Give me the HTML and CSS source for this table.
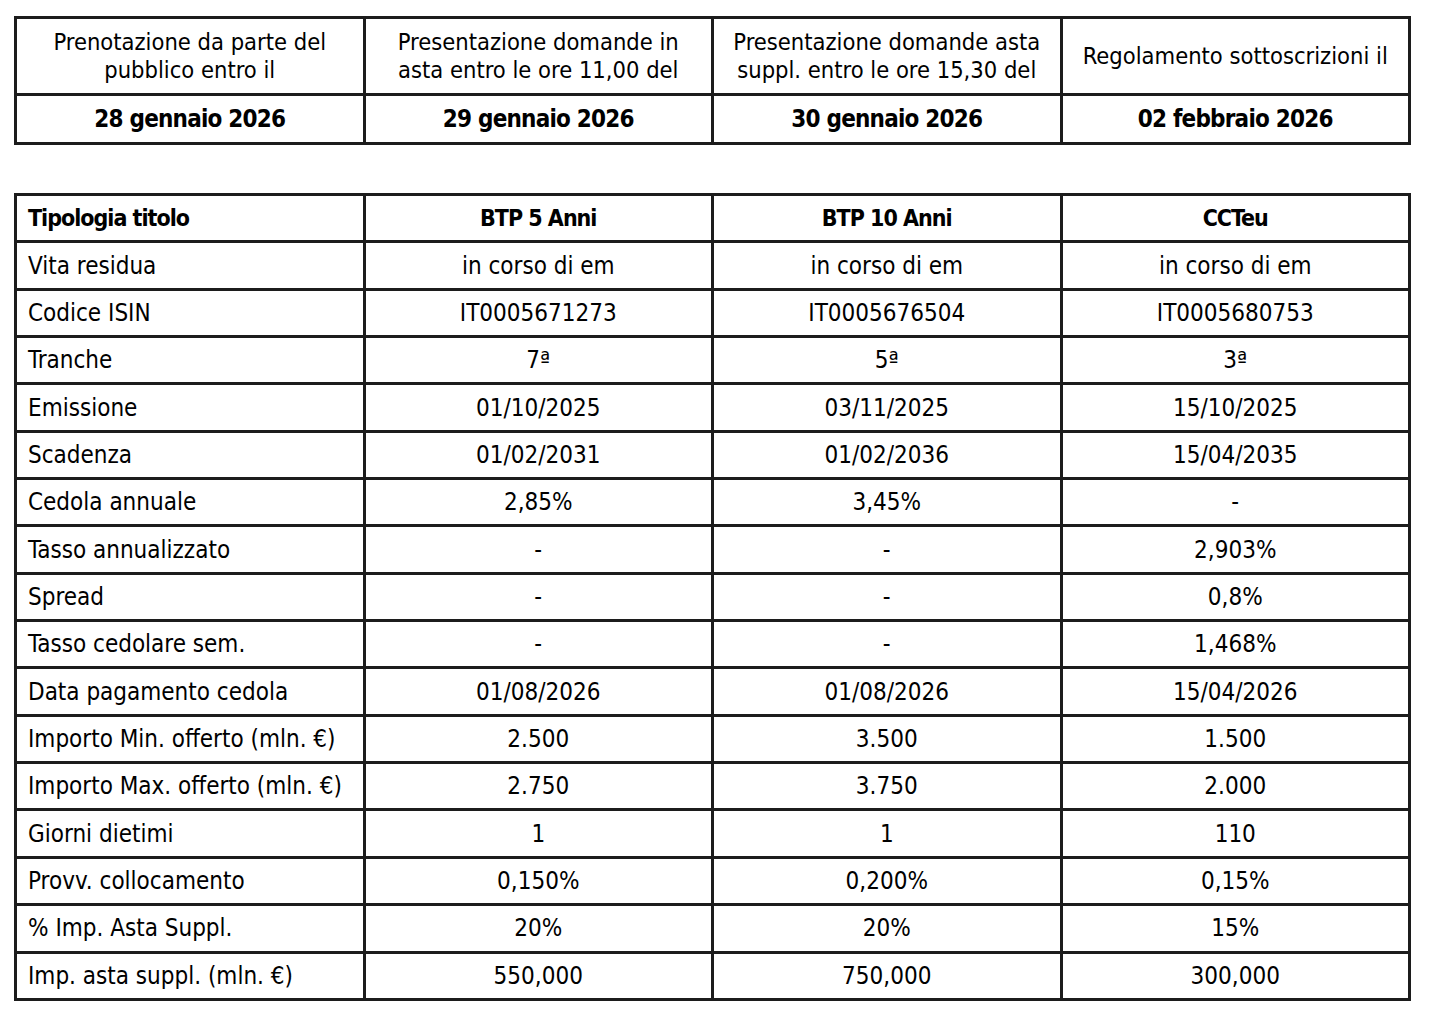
FILE: index.html
```html
<!DOCTYPE html>
<html lang="it">
<head>
<meta charset="utf-8">
<title>Asta titoli di Stato</title>
<link rel="stylesheet" href="styles.css">
</head>
<body>
<table class="dates">
  <tr class="dates-head">
    <td>Prenotazione da parte del pubblico entro il</td>
    <td>Presentazione domande in asta entro le ore 11,00 del</td>
    <td>Presentazione domande asta suppl. entro le ore 15,30 del</td>
    <td>Regolamento sottoscrizioni il</td>
  </tr>
  <tr class="dates-val">
    <td>28 gennaio 2026</td>
    <td>29 gennaio 2026</td>
    <td>30 gennaio 2026</td>
    <td>02 febbraio 2026</td>
  </tr>
</table>

<table class="bonds">
  <tr class="bonds-head"><td>Tipologia titolo</td><td>BTP 5 Anni</td><td>BTP 10 Anni</td><td>CCTeu</td></tr>
  <tr><td>Vita residua</td><td>in corso di em</td><td>in corso di em</td><td>in corso di em</td></tr>
  <tr><td>Codice ISIN</td><td>IT0005671273</td><td>IT0005676504</td><td>IT0005680753</td></tr>
  <tr><td>Tranche</td><td>7ª</td><td>5ª</td><td>3ª</td></tr>
  <tr><td>Emissione</td><td>01/10/2025</td><td>03/11/2025</td><td>15/10/2025</td></tr>
  <tr><td>Scadenza</td><td>01/02/2031</td><td>01/02/2036</td><td>15/04/2035</td></tr>
  <tr><td>Cedola annuale</td><td>2,85%</td><td>3,45%</td><td>-</td></tr>
  <tr><td>Tasso annualizzato</td><td>-</td><td>-</td><td>2,903%</td></tr>
  <tr><td>Spread</td><td>-</td><td>-</td><td>0,8%</td></tr>
  <tr><td>Tasso cedolare sem.</td><td>-</td><td>-</td><td>1,468%</td></tr>
  <tr><td>Data pagamento cedola</td><td>01/08/2026</td><td>01/08/2026</td><td>15/04/2026</td></tr>
  <tr><td>Importo Min. offerto (mln. €)</td><td>2.500</td><td>3.500</td><td>1.500</td></tr>
  <tr><td>Importo Max. offerto (mln. €)</td><td>2.750</td><td>3.750</td><td>2.000</td></tr>
  <tr><td>Giorni dietimi</td><td>1</td><td>1</td><td>110</td></tr>
  <tr><td>Provv. collocamento</td><td>0,150%</td><td>0,200%</td><td>0,15%</td></tr>
  <tr><td>% Imp. Asta Suppl.</td><td>20%</td><td>20%</td><td>15%</td></tr>
  <tr><td>Imp. asta suppl. (mln. €)</td><td>550,000</td><td>750,000</td><td>300,000</td></tr>
</table>
</body>
</html>
```
FILE: styles.css
```css
html, body {
  margin: 0;
  padding: 0;
  background: #ffffff;
}
body {
  padding: 16px 0 0 14px;
  font-family: "DejaVu Sans Condensed", "DejaVu Sans", sans-serif;
  font-stretch: condensed;
  color: #000;
}
table {
  border-collapse: collapse;
  table-layout: fixed;
  width: 1397px;
}
td {
  border: 3px solid #1c1c1c;
  padding: 0;
  text-align: center;
  vertical-align: middle;
}
.dates td {
  font-size: 23.5px;
  line-height: 28px;
}
.dates-head td {
  height: 74px;
  padding: 0 14px;
}
.dates-val td {
  height: 46px;
  font-weight: bold;
  font-size: 24px;
  letter-spacing: -0.8px;
}
.bonds {
  margin-top: 48px;
}
.bonds td {
  height: 44.35px;
  font-size: 24px;
}
.bonds td:first-child {
  text-align: left;
  padding-left: 11px;
}
.bonds-head td {
  font-weight: bold;
  font-size: 23px;
  letter-spacing: -1px;
}
```
